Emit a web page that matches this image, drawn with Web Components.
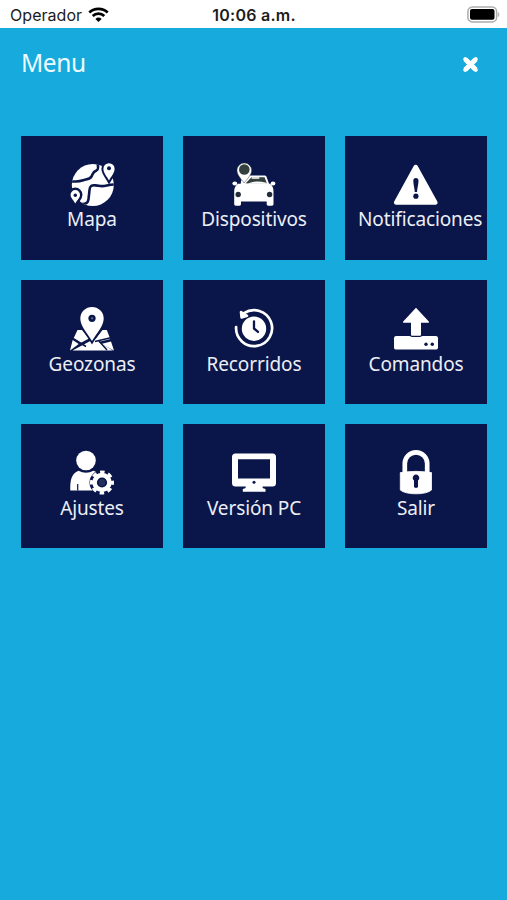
<!DOCTYPE html>
<html lang="es">
<head>
<meta charset="utf-8">
<title>Menu</title>
<style>
    html, body {
        margin: 0;
        height: 100%;
        background: #16aadd;
    }
</style>
</head>
<body>
<menu-app></menu-app>
<script>
'use strict';

// Icons share a 60px wide canvas, `c` is the tile colour used for cut-outs
const c = '#0a164a';
const icons = {
    map: `
        <clipPath id="globe"><circle cx="30.8" cy="30" r="21"/></clipPath>
        <circle cx="30.8" cy="30" r="21" fill="#fff"/>
        <g clip-path="url(#globe)" fill="none" stroke="${c}" stroke-width="2.6" stroke-linejoin="round">
            <path d="M8 26.500h6c4 0 5-.5 8-1.500 4-1 6-1 7.500-3.500 1.500-2.500 1-4.500 5-6 2-.8 2-3 1-7"/>
            <path d="M20 49c5 0 6-1.500 6.500-5 .4-4 .8-6 1-9 .3-4 2-5 6-4.600l5 .6c5 .6 7-1.500 14-1.500"/>
        </g>
        <path d="M47 25.500c-2.500-4.500-5.600-7.500-5.600-11.700a5.600 5.600 0 0 1 11.200 0c0 4.200-3.100 7.200-5.600 11.700z" fill="#fff" stroke="${c}" stroke-width="4" paint-order="stroke"/>
        <circle cx="47" cy="13.300" r="2" fill="${c}"/>
        <path d="M13.300 48.500c-2.300-4-4.700-5.500-4.700-8.700a4.700 4.700 0 0 1 9.400 0c0 3.200-2.400 4.700-4.700 8.700z" fill="#fff" stroke="${c}" stroke-width="5" paint-order="stroke"/>
        <circle cx="13.300" cy="40.300" r="1.700" fill="${c}"/>`,
    car: `
        <path d="M18 20.500h22.500c1 0 1.700.5 2.100 1.500L45.500 30h-29z" fill="#fff"/>
        <path d="M27.500 22.300h13L43 28.600H21.500z" fill="#33403e"/>
        <path d="M28 22.300h7l.5 1.500h-8zM26 27.700q6-2.500 16.500 0l.4 1H24z" fill="#fff"/>
        <ellipse cx="10.800" cy="28.500" rx="2.400" ry="1.900" fill="#fff"/>
        <ellipse cx="49" cy="28.500" rx="2.400" ry="1.900" fill="#fff"/>
        <path d="M14 28.800h32c2.500 2 3.500 4.200 3.500 7.700V49c0 1-.6 1.700-1.600 1.700h-3.600c-1 0-1.600-.7-1.600-1.700v-2.500H17V49c0 1-.6 1.700-1.600 1.700h-3.600c-1 0-1.600-.7-1.600-1.700V36.500c0-3.500 1.300-5.700 3.800-7.700z" fill="#fff"/>
        <circle cx="14.200" cy="39.500" r="2.700" fill="#222c38"/>
        <circle cx="45.600" cy="39.500" r="2.700" fill="#222c38"/>
        <path d="M20 28C16.500 23 13 19.800 13 15.300a7.300 7.300 0 0 1 14.600 0C27.600 19.800 24 23 20 28z" fill="#fff" stroke="#33403e" stroke-width=".5"/>
        <circle cx="20.300" cy="14.500" r="5.300" fill="#33403e"/>`,
    warning: `
        <path d="M29.700 11.600 49.300 47H10.200z" transform="translate(0 .5)" fill="#fff" stroke="#fff" stroke-width="4.600" stroke-linejoin="round"/>
        <path d="M27.300 25.500c0-3.300 5.200-3.300 5.200 0 0 4-1.200 7.500-1.500 11.500h-2.200c-.3-4-1.500-7.500-1.500-11.500z" fill="${c}"/>
        <circle cx="29.900" cy="41.200" r="2.600" fill="${c}"/>`,
    zone: `
        <path d="M15.500 32H20l7 8.500-8.500 4.500-7-4.500zM10.700 42l6 4-8.700 6.600zM40.500 32h4.300l3.500 9-12 3-3.300-2.300zM49 43.500l3 9L39 46z" fill="#fff"/>
        <path d="M10.500 52.400 33 40.600l5 4.400 13 7.400z" fill="#fff"/>
        <path d="M11 40.500l13 8M33 43.500l15.500-3.700M36.500 42.500 45 52" stroke="${c}" stroke-width="1.500" fill="none"/>
        <path d="M30 43C25 35 18.300 28 18.300 20.600a11.700 11.700 0 0 1 23.400 0C41.700 28 35 35 30 43z" fill="#fff" stroke="${c}" stroke-width="3.600" paint-order="stroke"/>
        <circle cx="30" cy="20.300" r="3.600" fill="${c}"/><circle cx="30.200" cy="20.300" r="1.100" fill="#65708d"/>`,
    history: `
        <path d="M12.100 29A18 18 0 1 0 20 15.200" fill="none" stroke="#fff" stroke-width="2.700" stroke-linecap="round"/>
        <path d="M17 14.200l.6 5.300 5.400-1.700z" fill="#fff" stroke="#fff" stroke-width="2.600" stroke-linejoin="round"/>
        <circle cx="30" cy="30.700" r="12.200" fill="#fff"/>
        <path d="M30 23.300v7.200l4 3.400" fill="none" stroke="${c}" stroke-width="2.300" stroke-linecap="round" stroke-linejoin="round"/>`,
    upload: `
        <rect x="8" y="38" width="44" height="13.600" rx="2.200" fill="#fff"/>
        <path d="M30 9.800 42.800 23.500c.5.600.2 1.300-.6 1.300H35V36.500c0 .8-.5 1.300-1.300 1.300h-7.400c-.8 0-1.300-.5-1.300-1.300V24.800h-7.200c-.8 0-1.100-.7-.6-1.300z" fill="#fff" stroke="${c}" stroke-width="2.400" paint-order="stroke"/>
        <circle cx="40" cy="46.300" r="1.700" fill="${c}"/><circle cx="46.300" cy="46.300" r="1.700" fill="${c}"/>`,
    user: `
        <circle cx="24" cy="18.500" r="9.800" fill="#fff"/>
        <path d="M8.300 48.400C8 38 9.500 31.500 16.500 28.800q7.500 4 15 0c2.500.8 3.500 1.800 4.500 3l-6 4-1 9 2 3.600z" fill="#fff"/>
        <path d="M15.700 42v6.400" stroke="${c}" stroke-width="1.200"/>
        <circle cx="40" cy="40.500" r="12.500" fill="${c}"/>
        <circle cx="40" cy="40.500" r="7.400" fill="none" stroke="#fff" stroke-width="4.600"/>
        <circle cx="40" cy="40.500" r="10.500" fill="none" stroke="#fff" stroke-width="3" stroke-dasharray="4.500 3.747" stroke-dashoffset="2.250"/>
        <circle cx="40" cy="40.500" r="3.400" fill="#232e5d"/>`,
    screen: `
        <path fill-rule="evenodd" d="M11.500 11.500h37a3.500 3.500 0 0 1 3.500 3.500v26a3.500 3.500 0 0 1-3.500 3.500H38.500c0 1.500.5 2 3 2.500v2.700H18.800V47c2.500-.5 3-1 3-2.500H11.500A3.500 3.500 0 0 1 8 41V15a3.500 3.500 0 0 1 3.500-3.500zM14 17.300v19.200h32V17.300z" fill="#fff"/>
        <circle cx="30" cy="40.300" r="1.500" fill="${c}"/>`,
    lock: `
        <path d="M18.800 31V21.500a11.200 11.200 0 0 1 22.400 0V31" fill="none" stroke="#fff" stroke-width="4.700"/>
        <path d="M14.300 30.600Q30 28 45.500 30.600V48Q41 51.800 30 51.800T14.300 48z" fill="#fff" stroke="#fff" stroke-width=".8" stroke-linejoin="round"/>
        <path d="M28 38.500a3.300 3.300 0 1 1 4 0v6.300c0 1.500-4 1.500-4 0z" fill="${c}"/>`
};

class StatusBar extends HTMLElement {
    constructor() {
        super();
        this.attachShadow({mode: 'open'}).innerHTML = `
            <style>
                :host {
                    display: grid;
                    grid-template-columns: 1fr auto 1fr;
                    align-items: center;
                    box-sizing: border-box;
                    height: 28px;
                    padding: 1px 7px 0 10px;
                    background: #fff;
                    color: #1c1c1c;
                    font: 16px/24px Inter, sans-serif;
                }
                .carrier { display: flex; align-items: center; gap: 6px; letter-spacing: .05px; }
                .time { font-weight: 600; letter-spacing: .25px; margin-right: 2px; }
                .battery { justify-self: end; }
                svg { display: block; }
            </style>
            <div class="carrier">
                <slot name="carrier"></slot>
                <svg width="21" height="16" viewBox="0 0 21 16" fill="none" stroke="#000" stroke-width="2.700">
                    <path d="M1.300 5.500a13.300 13.300 0 0 1 18.400 0M4.700 9a8.300 8.300 0 0 1 11.600 0"/>
                    <path d="M10.500 15 7.400 11.900a4.500 4.500 0 0 1 6.200 0z" fill="#000" stroke="none"/>
                </svg>
            </div>
            <div class="time"><slot name="time"></slot></div>
            <svg class="battery" width="33" height="17" viewBox="0 0 33 17">
                <rect x=".9" y=".9" width="28.700" height="15" rx="4.500" fill="#fff" stroke="#adadad" stroke-width="1.500"/>
                <rect x="3" y="3" width="24.500" height="10.800" rx="2" fill="#000"/>
                <path d="M31.300 6.500q1.500 2 0 4z" fill="#adadad" stroke="#adadad" stroke-width=".6"/>
            </svg>
        `;
    }
}

class MenuHeader extends HTMLElement {
    constructor() {
        super();
        this.attachShadow({mode: 'open'}).innerHTML = `
            <style>
                :host {
                    display: flex;
                    align-items: center;
                    justify-content: space-between;
                    height: 68px;
                    padding: 0 28px 0 21px;
                    color: #effcff;
                    font-size: 24.5px;
                    letter-spacing: -.4px;
                }
                svg { display: block; margin-top: 5px; }
            </style>
            <slot></slot>
            <svg width="17" height="17" viewBox="0 0 17 17">
                <path d="M3.200 3.200l10.600 10.600M13.800 3.200 3.200 13.800" stroke="#fff" stroke-width="4.800" stroke-linecap="butt"/>
                <path d="M3.200 3.200l10.600 10.600M13.800 3.200 3.200 13.800" stroke="#fff" stroke-width="4" stroke-linecap="round"/>
            </svg>
        `;
    }
}

class MenuTile extends HTMLElement {
    constructor() {
        super();
        this.attachShadow({mode: 'open'});
    }

    get icon() {
        return this.getAttribute('icon');
    }

    connectedCallback() {
        // the first row of icons sits one unit higher on its canvas
        const top = ['map', 'car', 'warning'].includes(this.icon) ? 5 : 6;
        this.shadowRoot.innerHTML = `
            <style>
                :host {
                    display: flex;
                    flex-direction: column;
                    box-sizing: border-box;
                    height: 124px;
                    padding: 24px 13px 0;
                    background: ${c};
                    color: #eceef5;
                    font-size: 19px;
                    line-height: 26px;
                    letter-spacing: -.12px;
                    text-align: center;
                }
                svg { display: block; align-self: center; flex: none; }
                .label { margin-top: ${top === 5 ? -4 : -3}px; }
            </style>
            <svg width="60" height="50" viewBox="0 ${top} 60 50">${icons[this.icon]}</svg>
            <div class="label"><slot></slot></div>
        `;
    }
}

class MenuApp extends HTMLElement {
    constructor() {
        super();
        this.attachShadow({mode: 'open'}).innerHTML = `
            <style>
                :host {
                    display: block;
                    min-height: 100%;
                    background: #16aadd;
                    font-family: "Noto Sans", "Open Sans", sans-serif;
                }
                .grid {
                    display: grid;
                    grid-template-columns: repeat(3, 142px);
                    gap: 20px;
                    padding: 40px 20px 0 21px;
                }
            </style>
            <status-bar>
                <span slot="carrier">Operador</span>
                <span slot="time">10:06 a.m.</span>
            </status-bar>
            <menu-header>Menu</menu-header>
            <div class="grid">
                <menu-tile icon="map">Mapa</menu-tile>
                <menu-tile icon="car">Dispositivos</menu-tile>
                <menu-tile icon="warning">Notificaciones</menu-tile>
                <menu-tile icon="zone">Geozonas</menu-tile>
                <menu-tile icon="history">Recorridos</menu-tile>
                <menu-tile icon="upload">Comandos</menu-tile>
                <menu-tile icon="user">Ajustes</menu-tile>
                <menu-tile icon="screen">Versión PC</menu-tile>
                <menu-tile icon="lock">Salir</menu-tile>
            </div>
        `;
    }
}

customElements.define('status-bar', StatusBar);
customElements.define('menu-header', MenuHeader);
customElements.define('menu-tile', MenuTile);
customElements.define('menu-app', MenuApp);
</script>
</body>
</html>
